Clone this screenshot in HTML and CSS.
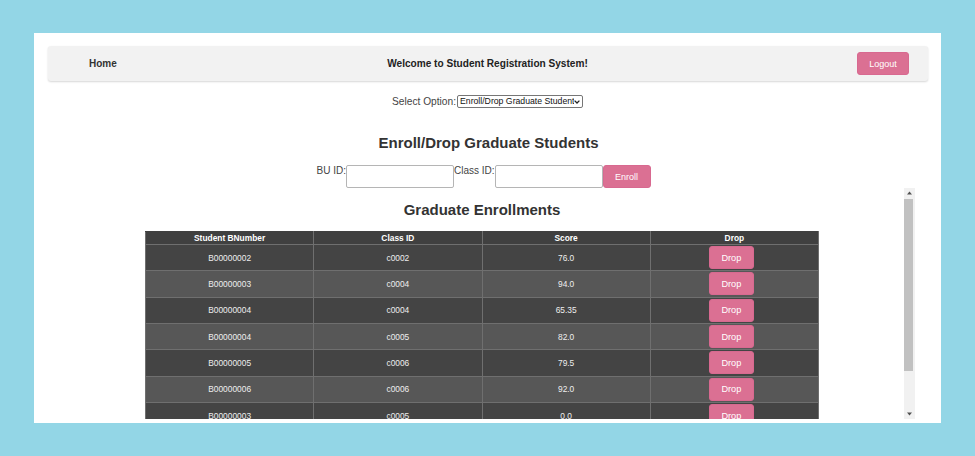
FILE: index.html
```html
<!DOCTYPE html>
<html lang="en">
<head>
<meta charset="utf-8">
<title>Student Registration System</title>
<link rel="stylesheet" href="styles.css">
</head>
<body>
<div class="panel">
  <nav class="navbar">
    <a class="nav-home" href="#">Home</a>
    <div class="nav-title">Welcome to Student Registration System!</div>
    <div class="nav-right"><button class="btn btn-logout">Logout</button></div>
  </nav>

  <div class="select-row">
    <label class="select-label" for="opt">Select Option:</label>
    <span class="select-wrap">
      <select id="opt" class="select-box">
        <option>Enroll/Drop Graduate Students</option>
      </select>
      <svg class="select-chevron" width="6" height="4" viewBox="0 0 6 4"><path d="M0.6 0.6 L3 3 L5.4 0.6" fill="none" stroke="#222" stroke-width="1.3"/></svg>
    </span>
  </div>

  <h2 class="title">Enroll/Drop Graduate Students</h2>

  <form class="enroll-form">
    <label class="form-label">BU ID:</label>
    <input class="form-input" type="text">
    <label class="form-label">Class ID:</label>
    <input class="form-input" type="text">
    <button type="button" class="btn btn-enroll">Enroll</button>
  </form>

  <div class="scroll-area">
    <div class="scroll-content">
      <h2 class="title title-sub">Graduate Enrollments</h2>
      <table class="grid">
        <thead>
          <tr><th>Student BNumber</th><th>Class ID</th><th>Score</th><th>Drop</th></tr>
        </thead>
        <tbody>
          <tr><td>B00000002</td><td>c0002</td><td>76.0</td><td><button class="btn btn-drop">Drop</button></td></tr>
          <tr><td>B00000003</td><td>c0004</td><td>94.0</td><td><button class="btn btn-drop">Drop</button></td></tr>
          <tr><td>B00000004</td><td>c0004</td><td>65.35</td><td><button class="btn btn-drop">Drop</button></td></tr>
          <tr><td>B00000004</td><td>c0005</td><td>82.0</td><td><button class="btn btn-drop">Drop</button></td></tr>
          <tr><td>B00000005</td><td>c0006</td><td>79.5</td><td><button class="btn btn-drop">Drop</button></td></tr>
          <tr><td>B00000006</td><td>c0006</td><td>92.0</td><td><button class="btn btn-drop">Drop</button></td></tr>
          <tr><td>B00000003</td><td>c0005</td><td>0.0</td><td><button class="btn btn-drop">Drop</button></td></tr>
          <tr><td>B00000007</td><td>c0002</td><td>88.0</td><td><button class="btn btn-drop">Drop</button></td></tr>
        </tbody>
      </table>
    </div>
    <div class="scrollbar" aria-hidden="true">
      <div class="sb-btn">
        <svg width="11" height="11" viewBox="0 0 11 11"><path d="M5.5 3.5 L8 6.5 L3 6.5 Z" fill="#505050"/></svg>
      </div>
      <div class="sb-track"><div class="sb-thumb"></div></div>
      <div class="sb-btn">
        <svg width="11" height="11" viewBox="0 0 11 11"><path d="M3 4.5 L8 4.5 L5.5 7.5 Z" fill="#505050"/></svg>
      </div>
    </div>
  </div>
</div>
</body>
</html>
```

FILE: styles.css
```css
* { box-sizing: border-box; }

html, body {
  margin: 0;
  height: 100%;
}

body {
  background: #93d6e6;
  padding: 33px 34px 0;
  font-family: "Liberation Sans", Arial, sans-serif;
  color: #333;
  font-size: 10px;
  overflow: hidden;
}

.panel {
  background: #fff;
  height: 390px;
  padding: 13px 13px 0 14px;
  overflow: hidden;
}

/* Navbar */
.navbar {
  height: 35px;
  background: #f2f2f2;
  border-radius: 3px;
  box-shadow: 0 1px 2px rgba(0, 0, 0, 0.16);
  display: grid;
  grid-template-columns: 1fr auto 1fr;
  align-items: center;
  padding: 0 19px 0 41px;
}

.nav-home {
  font-size: 10px;
  font-weight: bold;
  color: #333;
  text-decoration: none;
}

.nav-title {
  font-size: 10.1px;
  font-weight: bold;
  color: #222;
  padding-right: 23px;
}

.nav-right {
  display: flex;
  justify-content: flex-end;
}

/* Buttons */
.btn {
  font-family: "Liberation Sans", Arial, sans-serif;
  background: #db7093;
  color: #fff;
  border: 1px solid #d86990;
  border-radius: 3px;
  font-size: 9px;
  padding: 0;
  height: 23px;
  cursor: pointer;
}

.btn-logout { width: 52px; }
.btn-enroll { width: 48px; }
.btn-drop { width: 45px; font-size: 9.2px; }

/* Select row */
.select-row {
  margin-top: 14px;
  display: flex;
  justify-content: center;
  align-items: center;
  height: 13px;
  padding-right: 1px;
}

.select-label {
  font-size: 10.2px;
  color: #444;
  margin-right: 1px;
}

.select-wrap {
  position: relative;
  display: inline-flex;
}

.select-box {
  appearance: none;
  -webkit-appearance: none;
  width: 126px;
  height: 13px;
  font-size: 8.7px;
  line-height: 11px;
  font-family: "Liberation Sans", Arial, sans-serif;
  padding: 0 8px 0 2px;
  border: 1px solid #767676;
  border-radius: 2px;
  background: #fff;
  color: #111;
}

.select-chevron {
  position: absolute;
  right: 3px;
  top: 5px;
  pointer-events: none;
}

/* Headings */
.title {
  margin: 26px 0 0;
  font-size: 15px;
  line-height: 18px;
  text-align: center;
  color: #333;
  padding-left: 1px;
}

/* Enroll form */
.enroll-form {
  margin: 13px 0 0;
  display: flex;
  justify-content: center;
  align-items: flex-start;
  padding-right: 9px;
}

.form-label {
  font-size: 10px;
  line-height: 12px;
  color: #444;
}

.form-input {
  width: 108px;
  height: 23px;
  border: 1px solid #b5b5b5;
  border-radius: 2px;
  background: #fff;
}

/* Scroll area */
.scroll-area {
  margin: 0 13px 0 12px;
  height: 231px;
  display: flex;
}

.scroll-content {
  flex: 1;
  min-width: 0;
  overflow: hidden;
}

.title-sub {
  margin: 13px 0 12px;
  padding-left: 0;
}

.scrollbar {
  width: 11px;
  flex: none;
  display: flex;
  flex-direction: column;
  background: #f1f1f1;
}

.sb-btn {
  height: 11px;
  flex: none;
}

.sb-btn svg { display: block; }

.sb-track {
  flex: 1;
  padding-right: 2px;
}

.sb-thumb {
  height: 172px;
  background: #c1c1c1;
}

/* Table */
.grid {
  width: 674px;
  margin: 0 auto 14px;
  border-collapse: collapse;
  table-layout: fixed;
  font-size: 8.4px;
  color: #eee;
}

.grid th,
.grid td {
  border: 1px solid #6f6f6f;
  text-align: center;
  vertical-align: middle;
  padding: 0;
}

.grid th {
  background: #404040;
  color: #fff;
  font-weight: bold;
  height: 13px;
  line-height: 11px;
}

.grid thead tr th { border-top-color: #404040; }

.grid td {
  height: 26.33px;
}

.grid td:last-child { padding-right: 6px; }

.grid tbody tr:nth-child(odd) td { background: #444; }
.grid tbody tr:nth-child(even) td { background: #575757; }
```
